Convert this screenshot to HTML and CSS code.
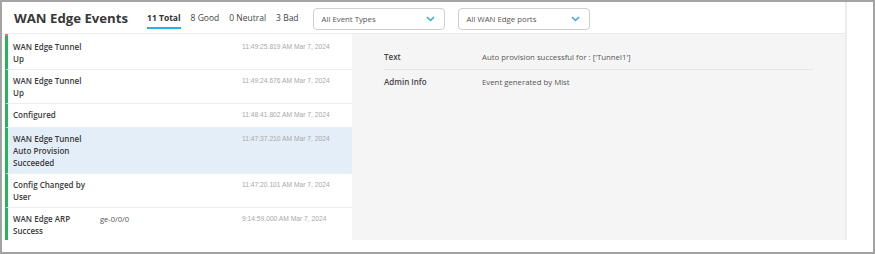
FILE: index.html
```html
<!DOCTYPE html>
<html lang="en">
<head>
<meta charset="utf-8">
<title>WAN Edge Events</title>
<link rel="stylesheet" href="styles.css">
</head>
<body>
<div class="frame">
  <div class="card">
    <div class="header">
      <h1 class="title">WAN Edge Events</h1>
      <div class="tabs">
        <div class="tab active">11 Total</div>
        <div class="tab">8 Good</div>
        <div class="tab">0 Neutral</div>
        <div class="tab">3 Bad</div>
      </div>
      <div class="select">
        <span>All Event Types</span>
        <svg class="chev" width="9" height="6" viewBox="0 0 9 6"><path d="M1 1 L4.5 4.5 L8 1" fill="none" stroke="#2aaee6" stroke-width="1.5"/></svg>
      </div>
      <div class="select">
        <span>All WAN Edge ports</span>
        <svg class="chev" width="9" height="6" viewBox="0 0 9 6"><path d="M1 1 L4.5 4.5 L8 1" fill="none" stroke="#2aaee6" stroke-width="1.5"/></svg>
      </div>
    </div>
    <div class="content">
      <div class="list">
        <div class="peek"></div>
        <div class="row">
          <div class="name">WAN Edge Tunnel Up</div>
          <div class="port"></div>
          <div class="time">11:49:25.819 AM Mar 7, 2024</div>
        </div>
        <div class="row">
          <div class="name">WAN Edge Tunnel Up</div>
          <div class="port"></div>
          <div class="time">11:49:24.676 AM Mar 7, 2024</div>
        </div>
        <div class="row">
          <div class="name">Configured</div>
          <div class="port"></div>
          <div class="time">11:48:41.802 AM Mar 7, 2024</div>
        </div>
        <div class="row selected">
          <div class="name">WAN Edge Tunnel Auto Provision Succeeded</div>
          <div class="port"></div>
          <div class="time">11:47:37.210 AM Mar 7, 2024</div>
        </div>
        <div class="row">
          <div class="name">Config Changed by User</div>
          <div class="port"></div>
          <div class="time">11:47:20.101 AM Mar 7, 2024</div>
        </div>
        <div class="row">
          <div class="name">WAN Edge ARP Success</div>
          <div class="port">ge-0/0/0</div>
          <div class="time">9:14:59.000 AM Mar 7, 2024</div>
        </div>
      </div>
      <div class="detail">
        <div class="drow">
          <div class="label">Text</div>
          <div class="value">Auto provision successful for : ['Tunnel1']</div>
        </div>
        <div class="drow last">
          <div class="label">Admin Info</div>
          <div class="value">Event generated by Mist</div>
        </div>
      </div>
    </div>
  </div>
</div>
</body>
</html>
```
FILE: styles.css
```css
* { box-sizing: border-box; }
html, body { margin: 0; padding: 0; }
body {
  width: 875px;
  height: 254px;
  font-family: "Open Sans", "Liberation Sans", sans-serif;
  color: #333;
  background: #fff;
}
.frame {
  width: 875px;
  height: 254px;
  border: 2px solid #a3a3a3;
  background: #fff;
}
.card {
  position: relative;
  width: 845px;
  height: 238px;
  border-right: 2px solid #ececec;
  display: flex;
  flex-direction: column;
  overflow: hidden;
}
.card::after {
  content: "";
  position: absolute;
  right: -2px;
  top: 213px;
  width: 1px;
  height: 25px;
  background: #9a9a9a;
}
.header {
  height: 32px;
  flex: none;
  display: flex;
  align-items: center;
  padding-left: 12px;
  border-bottom: 1px solid #ececec;
}
.title {
  margin: 0;
  font-size: 13.2px;
  font-weight: 700;
  color: #383838;
  line-height: 18px;
  margin-top: 1px;
}
.tabs {
  display: flex;
  gap: 10px;
  margin-left: 19px;
  align-self: stretch;
}
.tab {
  display: flex;
  align-items: center;
  font-size: 8.5px;
  color: #444;
  padding-top: 6px;
  margin-bottom: 4px;
  border-bottom: 2.5px solid transparent;
}
.tab.active {
  font-weight: 700;
  color: #333;
  border-bottom-color: #2aaee6;
}
.select {
  width: 132px;
  height: 22px;
  margin-top: 3px;
  margin-left: 14px;
  border: 1px solid #cfcfcf;
  border-radius: 4px;
  display: flex;
  align-items: center;
  justify-content: space-between;
  padding: 0 9px 0 8px;
  font-size: 7.8px;
  color: #555;
}
.select + .select { margin-left: 13px; }
.chev { display: block; }
.content {
  flex: 1;
  display: flex;
  padding-left: 3px;
  min-height: 0;
}
.list {
  width: 347px;
  flex: none;
  overflow: hidden;
}
.peek {
  height: 2px;
  border-left: 3px solid #e8707a;
}
.row {
  display: grid;
  grid-template-columns: 78px 133px 1fr;
  column-gap: 9px;
  align-items: start;
  min-height: 24px;
  padding: 5px 0 4px 5px;
  border-left: 3px solid #26b45a;
  border-bottom: 1px solid #eeeeee;
  background: #fff;
}
.row.selected { background: #e4eef8; }
.name {
  font-size: 8px;
  font-weight: 600;
  line-height: 12px;
  color: #3a3a3a;
}
.port {
  font-size: 7.5px;
  line-height: 12px;
  color: #555;
}
.time {
  font-family: "Liberation Sans", Arial, sans-serif;
  font-size: 6.7px;
  line-height: 11px;
  color: #a8a8a8;
}
.detail {
  flex: 1;
  background: #f5f5f5;
  padding: 11px 32px 0 32px;
}
.drow {
  display: flex;
  padding: 6px 0;
  line-height: 12px;
  border-bottom: 1px solid #e6e6e6;
}
.drow.last { border-bottom: none; }
.label {
  width: 98px;
  flex: none;
  font-size: 8px;
  font-weight: 600;
  color: #444;
}
.value {
  font-size: 7.8px;
  color: #555;
}
```
